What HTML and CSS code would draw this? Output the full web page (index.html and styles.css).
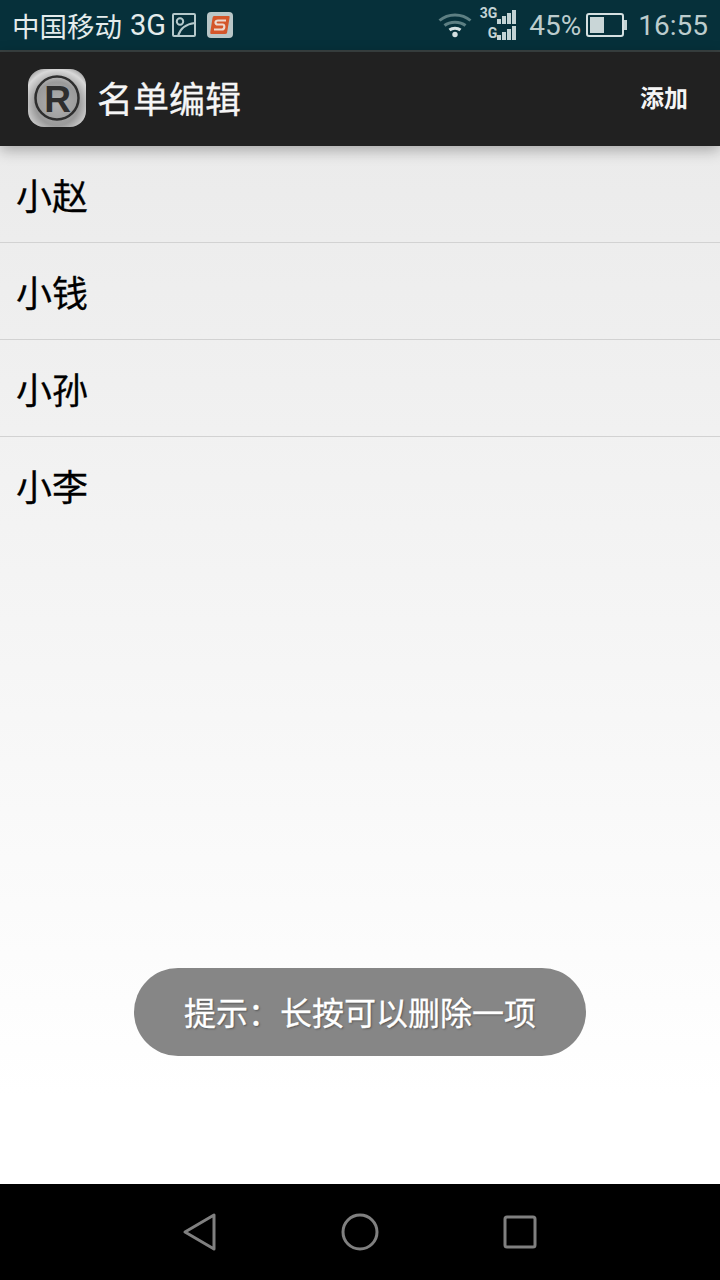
FILE: index.html
```html
<!DOCTYPE html>
<html lang="zh-CN">
<head>
    <meta charset="UTF-8">
    <meta name="viewport" content="width=device-width, initial-scale=1.0">
    <title>名单编辑</title>
    <link rel="stylesheet" href="styles.css">
</head>
<body>
    <div class="status-bar">
        <div class="status-left">
            <span class="carrier">中国移动</span>
            <span class="carrier-net">3G</span>
            <svg class="icon-photo" width="26" height="26" viewBox="0 0 26 26" fill="none" stroke="#b5c9cb" stroke-width="2">
                <rect x="2" y="2" width="22" height="22" rx="1"/>
                <circle cx="9" cy="9.500" r="3.200"/>
                <path d="M7 24 C9 17 15 12 24 11"/>
            </svg>
            <svg class="icon-sogou" width="26" height="26" viewBox="0 0 26 26">
                <rect width="26" height="26" rx="4" fill="#b9c7c8"/>
                <path d="M7 4 H22 Q23 4 22.500 6 L20 21 Q19.600 22 18 22 H4 Q3 22 3.300 20 L5.500 6 Q5.800 4 7 4 Z" fill="#d4562a"/>
                <path d="M19 8.500 H11 Q8.500 8.500 8.500 10.500 Q8.500 12.500 11 12.500 H15.500 Q17.500 12.500 17.300 15 Q17 17.500 15 17.500 H7" fill="none" stroke="#ecd9cf" stroke-width="2.200"/>
            </svg>
        </div>
        <div class="status-right">
            <svg class="icon-wifi" width="34" height="26" viewBox="0 0 34 26" fill="none" stroke="#5d7f83" stroke-width="3">
                <path d="M1.500 8.500 C10 1 24 1 32.500 8.500"/>
                <path d="M6.500 13.500 C12 9 22 9 27.500 13.500"/>
                <path d="M11.500 18 C14.500 15.500 19.500 15.500 22.500 18" stroke="#d5e0e1"/>
                <circle cx="17" cy="22.500" r="2.700" fill="#d5e0e1" stroke="none"/>
            </svg>
            <div class="signal">
                <div class="signal-row">
                    <span class="signal-label">3G</span>
                    <svg width="19" height="14" viewBox="0 0 19 14" fill="#c3d3d4">
                        <rect x="0" y="9" width="4" height="5"/>
                        <rect x="5" y="6" width="4" height="8"/>
                        <rect x="10" y="3" width="4" height="11"/>
                        <rect x="15" y="0" width="4" height="14"/>
                    </svg>
                </div>
                <div class="signal-row">
                    <span class="signal-label">G</span>
                    <svg width="19" height="14" viewBox="0 0 19 14" fill="#c3d3d4">
                        <rect x="0" y="9" width="4" height="5"/>
                        <rect x="5" y="6" width="4" height="8"/>
                        <rect x="10" y="3" width="4" height="11"/>
                        <rect x="15" y="0" width="4" height="14"/>
                    </svg>
                </div>
            </div>
            <span class="status-text percent">45%</span>
            <svg class="icon-battery" width="42" height="24" viewBox="0 0 42 24">
                <rect x="1" y="1" width="36" height="22" rx="2" fill="none" stroke="#d5e0e1" stroke-width="2"/>
                <rect x="4" y="4" width="14" height="16" fill="#c9d6d7"/>
                <rect x="38" y="7" width="3" height="10" fill="#c3d3d4"/>
            </svg>
            <span class="status-text">16:55</span>
        </div>
    </div>

    <div class="action-bar">
        <div class="action-left">
            <svg class="logo" width="58" height="58" viewBox="0 0 58 58">
                <defs>
                    <radialGradient id="metal" cx="0.5" cy="0.6" r="0.75">
                        <stop offset="0" stop-color="#b0b0b0"/>
                        <stop offset="0.5" stop-color="#9a9a9a"/>
                        <stop offset="0.78" stop-color="#d8d8d8"/>
                        <stop offset="1" stop-color="#808080"/>
                    </radialGradient>
                </defs>
                <rect width="58" height="58" rx="16" fill="url(#metal)"/>
                <circle cx="29" cy="29" r="21.500" fill="none" stroke="#2e2e2e" stroke-width="2.500"/>
                <text x="29.500" y="42.500" class="logo-letter" text-anchor="middle">R</text>
            </svg>
            <span class="title">名单编辑</span>
        </div>
        <span class="add-btn">添加</span>
    </div>

    <div class="content">
        <ul class="name-list">
            <li>小赵</li>
            <li>小钱</li>
            <li>小孙</li>
            <li>小李</li>
        </ul>
        <div class="toast">提示：长按可以删除一项</div>
    </div>

    <div class="nav-bar">
        <svg width="36" height="40" viewBox="0 0 36 40" fill="none" stroke="#808080" stroke-width="3" stroke-linejoin="round">
            <path d="M32 3 V37 L3 20 Z"/>
        </svg>
        <svg width="38" height="38" viewBox="0 0 38 38" fill="none" stroke="#808080" stroke-width="3">
            <circle cx="19" cy="19" r="17"/>
        </svg>
        <svg class="nav-recent" width="34" height="34" viewBox="0 0 34 34" fill="none" stroke="#808080" stroke-width="3" stroke-linejoin="round">
            <rect x="2" y="2" width="30" height="30" rx="2"/>
        </svg>
    </div>
</body>
</html>
```

FILE: styles.css
```css
html, body {
    height: 100%;
}
body {
    margin: 0;
    display: flex;
    flex-direction: column;
    height: 1280px;
    overflow: hidden;
    font-family: "Noto Sans CJK SC", "Roboto", sans-serif;
    background-color: #fff;
}
.status-bar {
    height: 50px;
    display: flex;
    justify-content: space-between;
    align-items: center;
    padding: 0 12px;
    background-color: #06303a;
    border-bottom: 2px solid #3a4242;
}
.status-left, .status-right {
    display: flex;
    align-items: center;
}
.carrier {
    font-size: 27.500px;
    color: #e4ecec;
}
.carrier-net {
    margin-left: 8px;
    font-family: "Roboto", sans-serif;
    font-size: 29px;
    color: #e4ecec;
}
.icon-photo {
    margin-left: 5px;
}
.icon-sogou {
    margin-left: 10px;
}
.signal {
    width: 37px;
    margin-left: 7px;
    display: flex;
    flex-direction: column;
    gap: 2px;
}
.signal-row {
    height: 14px;
    display: flex;
    justify-content: flex-end;
}
.signal-label {
    margin-top: -4px;
    font-family: "Roboto", sans-serif;
    font-size: 14px;
    line-height: 14px;
    font-weight: bold;
    color: #c3d3d4;
}
.signal-row + .signal-row .signal-label {
    margin-top: 0;
}
.status-text {
    font-family: "Roboto", sans-serif;
    font-size: 28px;
    color: #bccccd;
}
.percent {
    margin-left: 13px;
}
.icon-battery {
    margin: 0 10px 0 5px;
}
.action-bar {
    height: 91px;
    display: flex;
    justify-content: space-between;
    align-items: center;
    padding: 0 32px 3px 28px;
    background-color: #212121;
    box-shadow: 0 4px 14px rgba(0, 0, 0, 0.3);
    z-index: 1;
}
.action-left {
    display: flex;
    align-items: center;
}
.logo {
    margin-top: 1px;
}
.logo-letter {
    font-family: "Liberation Sans", sans-serif;
    font-size: 37px;
    font-weight: bold;
    fill: #2e2e2e;
}
.title {
    margin: 0 0 2px 11px;
    font-size: 36px;
    -webkit-text-stroke: 0.3px #f5f5f5;
    color: #f5f5f5;
}
.add-btn {
    margin-bottom: 2px;
    font-size: 24px;
    font-weight: bold;
    color: #f5f5f5;
}
.content {
    flex: 1;
    position: relative;
    background: linear-gradient(to bottom, #ebebeb 0, #fff 950px);
}
.name-list {
    list-style: none;
    margin: 0;
    padding: 0;
}
.name-list li {
    height: 96px;
    display: flex;
    align-items: center;
    padding-left: 16px;
    font-size: 36px;
    -webkit-text-stroke: 0.3px #000;
    color: #000;
    border-bottom: 1px solid #d2d2d2;
}
.name-list li:last-child {
    border-bottom: none;
}
.toast {
    position: absolute;
    left: 134px;
    top: 822px;
    width: 452px;
    height: 86px;
    padding-bottom: 2px;
    display: flex;
    justify-content: center;
    align-items: center;
    border-radius: 44px;
    background-color: #868686;
    color: #fff;
    font-size: 32px;
    -webkit-text-stroke: 0.3px #fff;
    text-shadow: 1px 1px 2px rgba(0, 0, 0, 0.4);
}
.nav-bar {
    height: 96px;
    display: flex;
    justify-content: center;
    align-items: center;
    gap: 123px;
    padding-right: 1px;
    background-color: #000;
}
.nav-recent {
    margin-left: 1px;
}
```
